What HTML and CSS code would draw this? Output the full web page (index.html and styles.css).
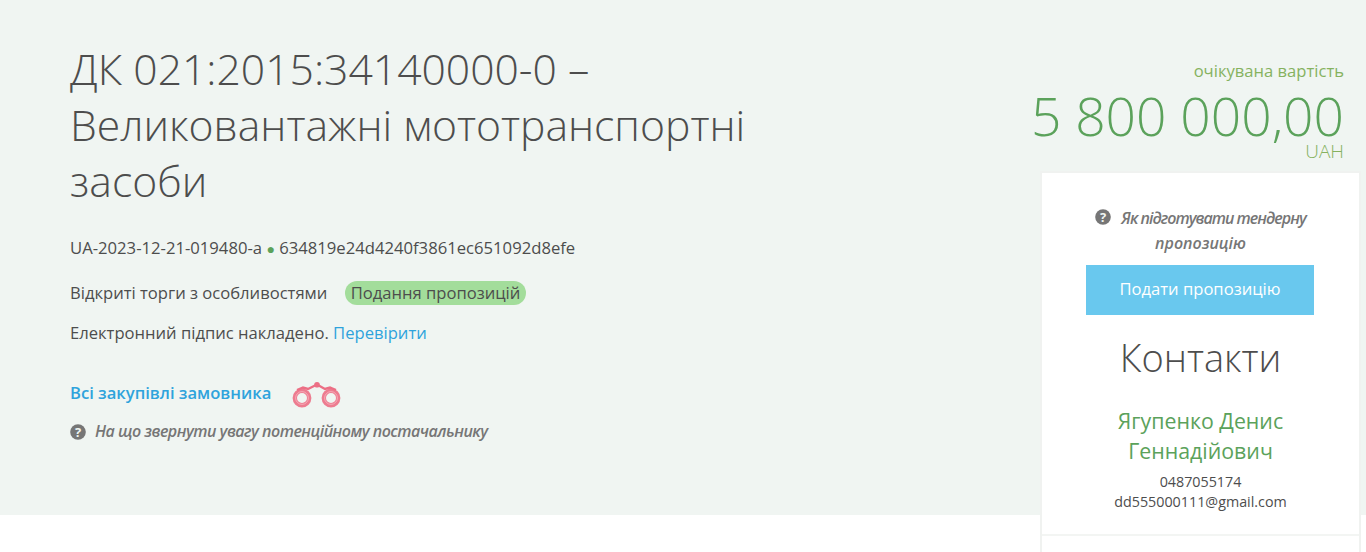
FILE: index.html
```html
<!DOCTYPE html>
<html lang="uk">
<head>
    <meta charset="UTF-8">
    <title>ДК 021:2015:34140000-0</title>
    <link rel="stylesheet" href="styles.css">
</head>
<body>
    <div class="tender-head">
        <div class="tender-info">
            <h1>ДК 021:2015:34140000-0 – Великовантажні мототранспортні засоби</h1>
            <p class="tender-id">UA-2023-12-21-019480-a <span class="dot">●</span> 634819e24d4240f3861ec651092d8efe</p>
            <p class="tender-type">Відкриті торги з особливостями <span class="status">Подання пропозицій</span></p>
            <p class="tender-sign">Електронний підпис накладено. <a href="#">Перевірити</a></p>
            <p class="tender-all">
                <a href="#">Всі закупівлі замовника</a>
                <svg class="binoculars" width="50" height="26" viewBox="0 0 50 26" fill="none" stroke="#ec6f85">
                    <circle cx="10" cy="16" r="7.2" stroke-width="4.4" stroke-opacity=".9"/>
                    <circle cx="10" cy="16" r="6.4" stroke="#f7b6c2" stroke-width=".8"/>
                    <circle cx="39" cy="16" r="7.2" stroke-width="4.4" stroke-opacity=".9"/>
                    <circle cx="39" cy="16" r="6.4" stroke="#f7b6c2" stroke-width=".8"/>
                    <path d="M5 8 L11 5.5 L16 7 L25 2.5 L33 7 L38 5.5 L44 8" stroke-width="2.4"/>
                    <circle cx="25" cy="2.8" r="2.8" fill="#ec6f85" stroke="none"/>
                </svg>
            </p>
            <p class="hint hint-left">
                <svg class="hint-icon" width="16" height="16" viewBox="0 0 16 16"><circle cx="8" cy="8" r="7.8" fill="#767676"/><text x="8" y="12.5" text-anchor="middle" class="hint-mark">?</text></svg>
                <em>На що звернути увагу потенційному постачальнику</em>
            </p>
        </div>
        <div class="tender-side">
            <div class="value-label">очікувана вартість</div>
            <div class="value-amount">5 800 000,00</div>
            <div class="value-currency">UAH</div>
            <div class="side-card">
                <div class="side-top">
                    <p class="hint hint-side">
                        <svg class="hint-icon" width="16" height="16" viewBox="0 0 16 16"><circle cx="8" cy="8" r="7.8" fill="#767676"/><text x="8" y="12.5" text-anchor="middle" class="hint-mark">?</text></svg>
                        <em>Як підготувати тендерну пропозицію</em>
                    </p>
                    <a class="submit-btn" href="#">Подати пропозицію</a>
                    <h2>Контакти</h2>
                    <div class="contact-name">Ягупенко Денис Геннадійович</div>
                    <div class="contact-line">0487055174</div>
                    <div class="contact-line">dd555000111@gmail.com</div>
                </div>
            </div>
        </div>
    </div>
</body>
</html>
```

FILE: styles.css
```css
* {
    box-sizing: border-box;
    margin: 0;
    padding: 0;
}

html, body {
    height: 552px;
    overflow: hidden;
}

body {
    font-family: 'Open Sans', sans-serif;
    background: #fff;
    color: #4d4d4d;
    font-size: 16.6px;
}

a {
    color: #2ea3dc;
    text-decoration: none;
}

.tender-head {
    display: flex;
    justify-content: space-between;
    height: 515px;
    background: #f0f5f2;
    padding: 0 5px 0 70px;
}

.tender-info {
    width: 700px;
    padding-top: 41px;
}

.tender-info h1 {
    font-size: 42.67px;
    font-weight: 300;
    line-height: 56px;
    color: #4d4d4d;
    margin-bottom: 27px;
}

.tender-id {
    font-size: 16.67px;
    line-height: 24px;
    margin-bottom: 20px;
}

.dot {
    color: #5ba25b;
    font-size: 14px;
}

.tender-type {
    line-height: 24px;
    margin-bottom: 16px;
}

.status {
    display: inline-block;
    background: #a3dd9b;
    border-radius: 12px;
    line-height: 24px;
    padding: 0 6px;
    margin-left: 13px;
}

.tender-sign {
    line-height: 24px;
    margin-bottom: 33px;
}

.tender-all {
    display: flex;
    align-items: center;
    height: 28px;
    font-weight: 600;
    margin-bottom: 13px;
}

.binoculars {
    margin: 6px 0 0 21px;
}

.hint {
    color: #767676;
    font-size: 16px;
    font-weight: 600;
    letter-spacing: -0.5px;
    line-height: 25px;
}

.hint-left {
    display: flex;
    align-items: center;
    gap: 9px;
}

.hint-mark {
    font-family: 'Open Sans', sans-serif;
    font-size: 13px;
    font-weight: 700;
    letter-spacing: 0;
    fill: #f0f5f2;
}

.tender-side {
    width: 321px;
    text-align: right;
    padding-top: 59px;
}

.value-label {
    color: #86b25f;
    line-height: 24px;
    padding-right: 17px;
}

.value-amount {
    color: #5ba25b;
    font-size: 53.33px;
    font-weight: 300;
    line-height: 52px;
    margin: 7px 0 0 -20px;
    padding-right: 17px;
    white-space: nowrap;
}

.value-currency {
    color: #86b25f;
    font-size: 19px;
    font-weight: 300;
    line-height: 20px;
    margin-top: -1px;
    padding-right: 17px;
}

.side-card {
    margin-top: 10px;
    background: #fff;
    border: 2px solid #f0f2f0;
    text-align: center;
    height: 500px;
}

.side-top {
    padding: 33px 40px 22px;
    border-bottom: 2px solid #f3f5f3;
}

.hint-side {
    letter-spacing: 0;
}

.hint-side::first-line {
    letter-spacing: -0.98px;
}

.hint-side .hint-icon {
    margin-right: 7px;
    vertical-align: -1px;
}

.submit-btn {
    display: block;
    background: #69c8ee;
    color: #fff;
    height: 50px;
    line-height: 48px;
    margin: 9px 5px 0 4px;
}

.side-top h2 {
    font-size: 38px;
    font-weight: 300;
    line-height: 48px;
    margin-top: 18px;
    color: #4d4d4d;
}

.contact-name {
    color: #5ba25b;
    font-size: 21.33px;
    line-height: 30px;
    margin: 25px 5px 6px;
}

.contact-line {
    font-size: 14.3px;
    line-height: 20px;
}
```
